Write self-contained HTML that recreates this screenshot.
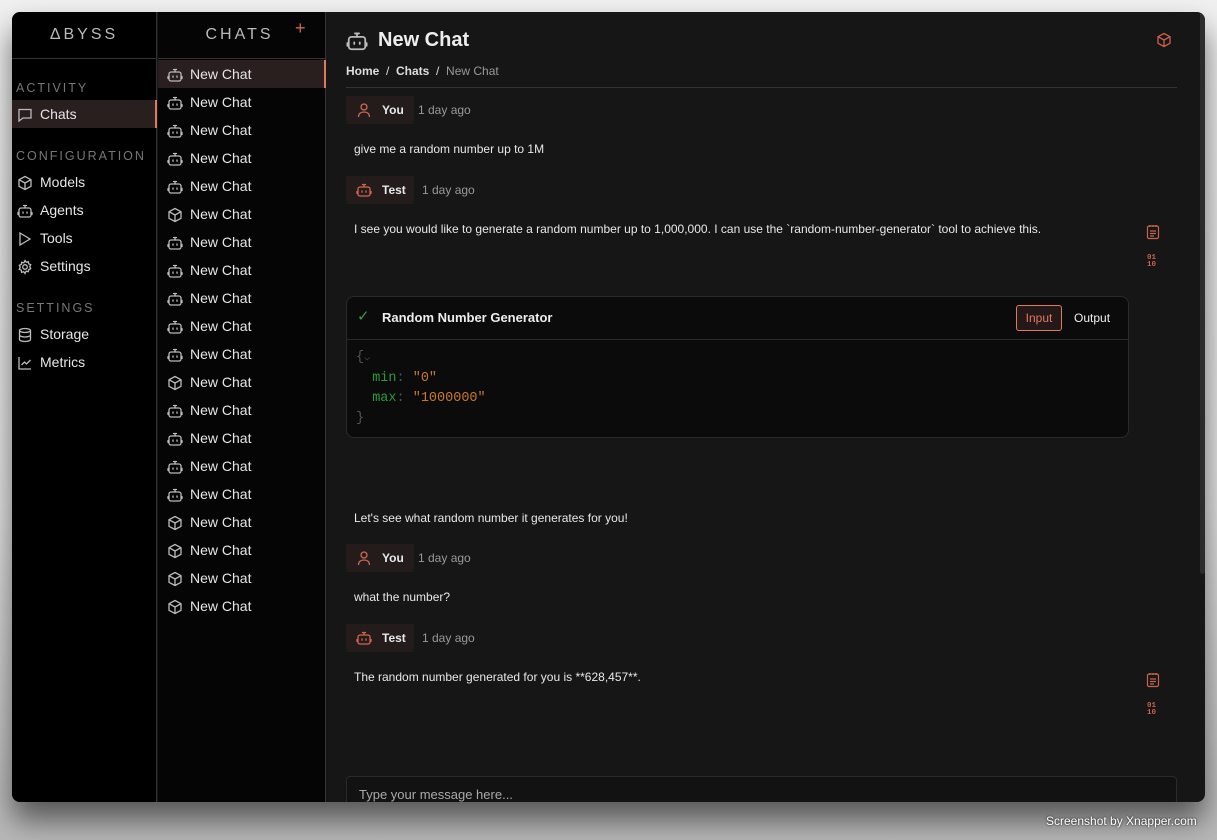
<!DOCTYPE html><html><head><style>
*{margin:0;padding:0;box-sizing:border-box}
body{width:1217px;height:840px;background:linear-gradient(#f0f0f0,#e4e4e4 60%,#b8b8b8);font-family:"Liberation Sans",sans-serif;position:relative;overflow:hidden}
.win{position:absolute;left:12px;top:12px;width:1193px;height:790px;border-radius:8px;overflow:hidden;background:#161616;box-shadow:0 18px 30px rgba(0,0,0,.55)}
.s1{position:absolute;left:0;top:0;width:145px;height:790px;background:#000;border-right:1px solid #333}
.s2{position:absolute;left:146px;top:0;width:168px;height:790px;background:#050505;border-right:1px solid #333}
.hd{position:relative;height:47px;border-bottom:1px solid #333;color:#bbb;font-size:16px;letter-spacing:3px;text-align:center;line-height:46px;font-weight:300}
.sec{color:#777;font-size:12.5px;letter-spacing:2px;padding-left:4px;position:absolute}
.it{position:absolute;left:0;width:145px;height:28px;color:#e6e6e6;font-size:14px;line-height:28px;padding-left:28px}
.it svg{position:absolute;left:5px;top:7px}
.act{background:#2a1f1f;border-right:2px solid #e07a5f}
.ci{position:absolute;left:0;width:168px;height:28px;color:#e6e6e6;font-size:14px;line-height:28px;padding-left:32px}
.ci svg{position:absolute;left:9px;top:7px}
.main{position:absolute;left:314px;top:0;right:0;height:790px}
.t{position:absolute;font-size:12px;color:#e8e8e8}
.badge{position:absolute;left:20px;height:28px;background:#241b1b;border-radius:2px;color:#e8e8e8;font-size:12px;font-weight:bold;line-height:28px;padding-left:36px}
.badge svg{position:absolute;left:10px;top:6px}
.ago{position:absolute;color:#999;font-size:12px}
</style></head><body>
<svg width="0" height="0" style="position:absolute"><defs>
<g id="bot" fill="none" stroke-width="1.3" stroke-linecap="round"><rect x="2" y="5" width="12" height="9" rx="2"/><path d="M8 5V2.5M6.5 2.5h3M1 9.5v2M15 9.5v2M6 9v1.2M10 9v1.2"/></g>
<g id="cube" fill="none" stroke-width="1.3" stroke-linejoin="round"><path d="M8 1.5l6 3.2v6.6L8 14.5 2 11.3V4.7z M2 4.7l6 3.3 6-3.3 M8 8v6.5"/></g>
</defs></svg>
<div class="win">
<div class="s1"><div class="hd">ΔBYSS</div>
<div class="sec" style="top:69px">ACTIVITY</div>
<div class="it act" style="top:88px"><svg width="16" height="16" fill="none" stroke="#bbb" stroke-width="1.3"><path d="M2 2.5h12v8.5H6l-4 3z"/></svg>Chats</div>
<div class="sec" style="top:137px">CONFIGURATION</div>
<div class="it" style="top:156px"><svg width="16" height="16" stroke="#bbb"><use href="#cube"/></svg>Models</div>
<div class="it" style="top:184px"><svg width="16" height="16" stroke="#bbb"><use href="#bot"/></svg>Agents</div>
<div class="it" style="top:212px"><svg width="16" height="16" fill="none" stroke="#bbb" stroke-width="1.3"><path d="M3 2l10 6-10 6z"/></svg>Tools</div>
<div class="it" style="top:240px"><svg width="16" height="16" fill="none" stroke="#bbb" stroke-width="1.3"><circle cx="8" cy="8" r="2.3"/><path d="M8 1.5l1.2 1.8 2.1-.6.4 2.1 2 .9-.9 2 .9 2-2 .9-.4 2.1-2.1-.6L8 14.5l-1.2-1.8-2.1.6-.4-2.1-2-.9.9-2-.9-2 2-.9.4-2.1 2.1.6z"/></svg>Settings</div>
<div class="sec" style="top:289px">SETTINGS</div>
<div class="it" style="top:308px"><svg width="16" height="16" fill="none" stroke="#bbb" stroke-width="1.3"><ellipse cx="8" cy="3.5" rx="5.5" ry="2"/><path d="M2.5 3.5v9c0 1.1 2.5 2 5.5 2s5.5-.9 5.5-2v-9M2.5 8c0 1.1 2.5 2 5.5 2s5.5-.9 5.5-2"/></svg>Storage</div>
<div class="it" style="top:336px"><svg width="16" height="16" fill="none" stroke="#bbb" stroke-width="1.3"><path d="M2 2v12h12M4.5 10l3-3 2 2 4-4"/></svg>Metrics</div>
</div>
<div class="s2"><div class="hd" style="padding-right:4px">CHATS<span style="position:absolute;left:137px;top:-7px;color:#d0684f;font-size:18px;letter-spacing:0">+</span></div>
<div id="cl"></div></div>
<div class="main">
<svg style="position:absolute;left:20px;top:18px" width="22" height="22" viewBox="0 0 16 16" stroke="#bbb"><use href="#bot"/></svg>
<div style="position:absolute;left:52px;top:17px;color:#eee;font-size:20px;font-weight:bold">New Chat</div>
<svg style="position:absolute;left:830px;top:20px" width="16" height="16" stroke="#c9624a"><use href="#cube"/></svg>
<div style="position:absolute;left:20px;top:52px;font-size:12px;color:#ddd"><b>Home</b> &nbsp;/&nbsp; <b>Chats</b> &nbsp;/&nbsp; <span style="color:#999">New Chat</span></div>
<div style="position:absolute;left:20px;top:75px;width:831px;height:1px;background:#333"></div>
<div class="badge" style="top:84px;width:68px"><svg width="16" height="16" fill="none" stroke="#d0684f" stroke-width="1.3"><circle cx="8" cy="5" r="3"/><path d="M2.5 15c0-3.5 2.5-5 5.5-5s5.5 1.5 5.5 5"/></svg>You</div>
<div class="ago" style="left:92px;top:91px">1 day ago</div>
<div class="t" style="left:28px;top:130px">give me a random number up to 1M</div>
<div class="badge" style="top:164px;width:68px"><svg width="16" height="16" stroke="#d0684f"><use href="#bot"/></svg>Test</div>
<div class="ago" style="left:96px;top:171px">1 day ago</div>
<div class="t" style="left:28px;top:210px">I see you would like to generate a random number up to 1,000,000. I can use the `random-number-generator` tool to achieve this.</div>
<svg style="position:absolute;left:820px;top:212px" width="14" height="16" fill="none" stroke="#c9624a" stroke-width="1.2"><rect x="1.5" y="2" width="11" height="12.5" rx="1.5"/><path d="M4 1v2M7 1v2M10 1v2M4 7h6M4 9.5h6M4 12h4"/></svg>
<div style="position:absolute;left:821px;top:243px;color:#c9624a;font-family:'Liberation Mono',monospace;font-size:7.5px;line-height:7px;font-weight:bold">01<br>10</div>
<div style="position:absolute;left:20px;top:284px;width:783px;height:142px;background:#0b0b0b;border:1px solid #2a2a2a;border-radius:8px">
<div style="height:43px;border-bottom:1px solid #2a2a2a;position:relative">
<span style="position:absolute;left:10px;top:10px;color:#3a9a4a;font-size:15px">✓</span>
<span style="position:absolute;left:35px;top:13px;color:#eee;font-size:13px;font-weight:bold">Random Number Generator</span>
<span style="position:absolute;left:669px;top:8px;width:46px;height:26px;border:1px solid #e07a5f;background:#241818;border-radius:3px;color:#e07a5f;font-size:12px;text-align:center;line-height:24px">Input</span>
<span style="position:absolute;left:727px;top:14px;color:#eee;font-size:12px">Output</span></div>
<div style="font-family:'Liberation Mono',monospace;font-size:13.5px;line-height:20px;padding:8px 0 0 9px;color:#555">{<span style="font-size:10px">⌵</span><br>&nbsp;&nbsp;<span style="color:#2a9a3a">min</span>: <span style="color:#c8782c">"0"</span><br>&nbsp;&nbsp;<span style="color:#2a9a3a">max</span>: <span style="color:#c8782c">"1000000"</span><br>}</div></div>
<div class="t" style="left:28px;top:499px">Let's see what random number it generates for you!</div>
<div class="badge" style="top:532px;width:68px"><svg width="16" height="16" fill="none" stroke="#d0684f" stroke-width="1.3"><circle cx="8" cy="5" r="3"/><path d="M2.5 15c0-3.5 2.5-5 5.5-5s5.5 1.5 5.5 5"/></svg>You</div>
<div class="ago" style="left:92px;top:539px">1 day ago</div>
<div class="t" style="left:28px;top:578px">what the number?</div>
<div class="badge" style="top:612px;width:68px"><svg width="16" height="16" stroke="#d0684f"><use href="#bot"/></svg>Test</div>
<div class="ago" style="left:96px;top:619px">1 day ago</div>
<div class="t" style="left:28px;top:658px">The random number generated for you is **628,457**.</div>
<svg style="position:absolute;left:820px;top:660px" width="14" height="16" fill="none" stroke="#c9624a" stroke-width="1.2"><rect x="1.5" y="2" width="11" height="12.5" rx="1.5"/><path d="M4 1v2M7 1v2M10 1v2M4 7h6M4 9.5h6M4 12h4"/></svg>
<div style="position:absolute;left:821px;top:691px;color:#c9624a;font-family:'Liberation Mono',monospace;font-size:7.5px;line-height:7px;font-weight:bold">01<br>10</div>
<div style="position:absolute;left:20px;top:764px;width:831px;height:40px;background:#121212;border:1px solid #2a2a2a;border-radius:4px;color:#aaa;font-size:13px;padding:10px 12px">Type your message here...</div>
<div style="position:absolute;left:874px;top:0;width:5px;height:562px;background:#2c2c2c;border-radius:3px"></div>
</div></div>
<div style="position:absolute;left:1046px;top:814px;color:#fff;font-size:12px;text-shadow:0 0 2px #000">Screenshot by Xnapper.com</div>
<script>
var cubes=[5,11,16,17,18,19],h='';
for(var i=0;i<20;i++){h+='<div class="ci'+(i==0?' act':'')+'" style="top:'+(48+28*i)+'px;"><svg width="16" height="16" stroke="#bbb"><use href="#'+(cubes.indexOf(i)>=0?'cube':'bot')+'"/></svg>New Chat</div>';}
document.getElementById('cl').innerHTML=h;
</script>
</body></html>
